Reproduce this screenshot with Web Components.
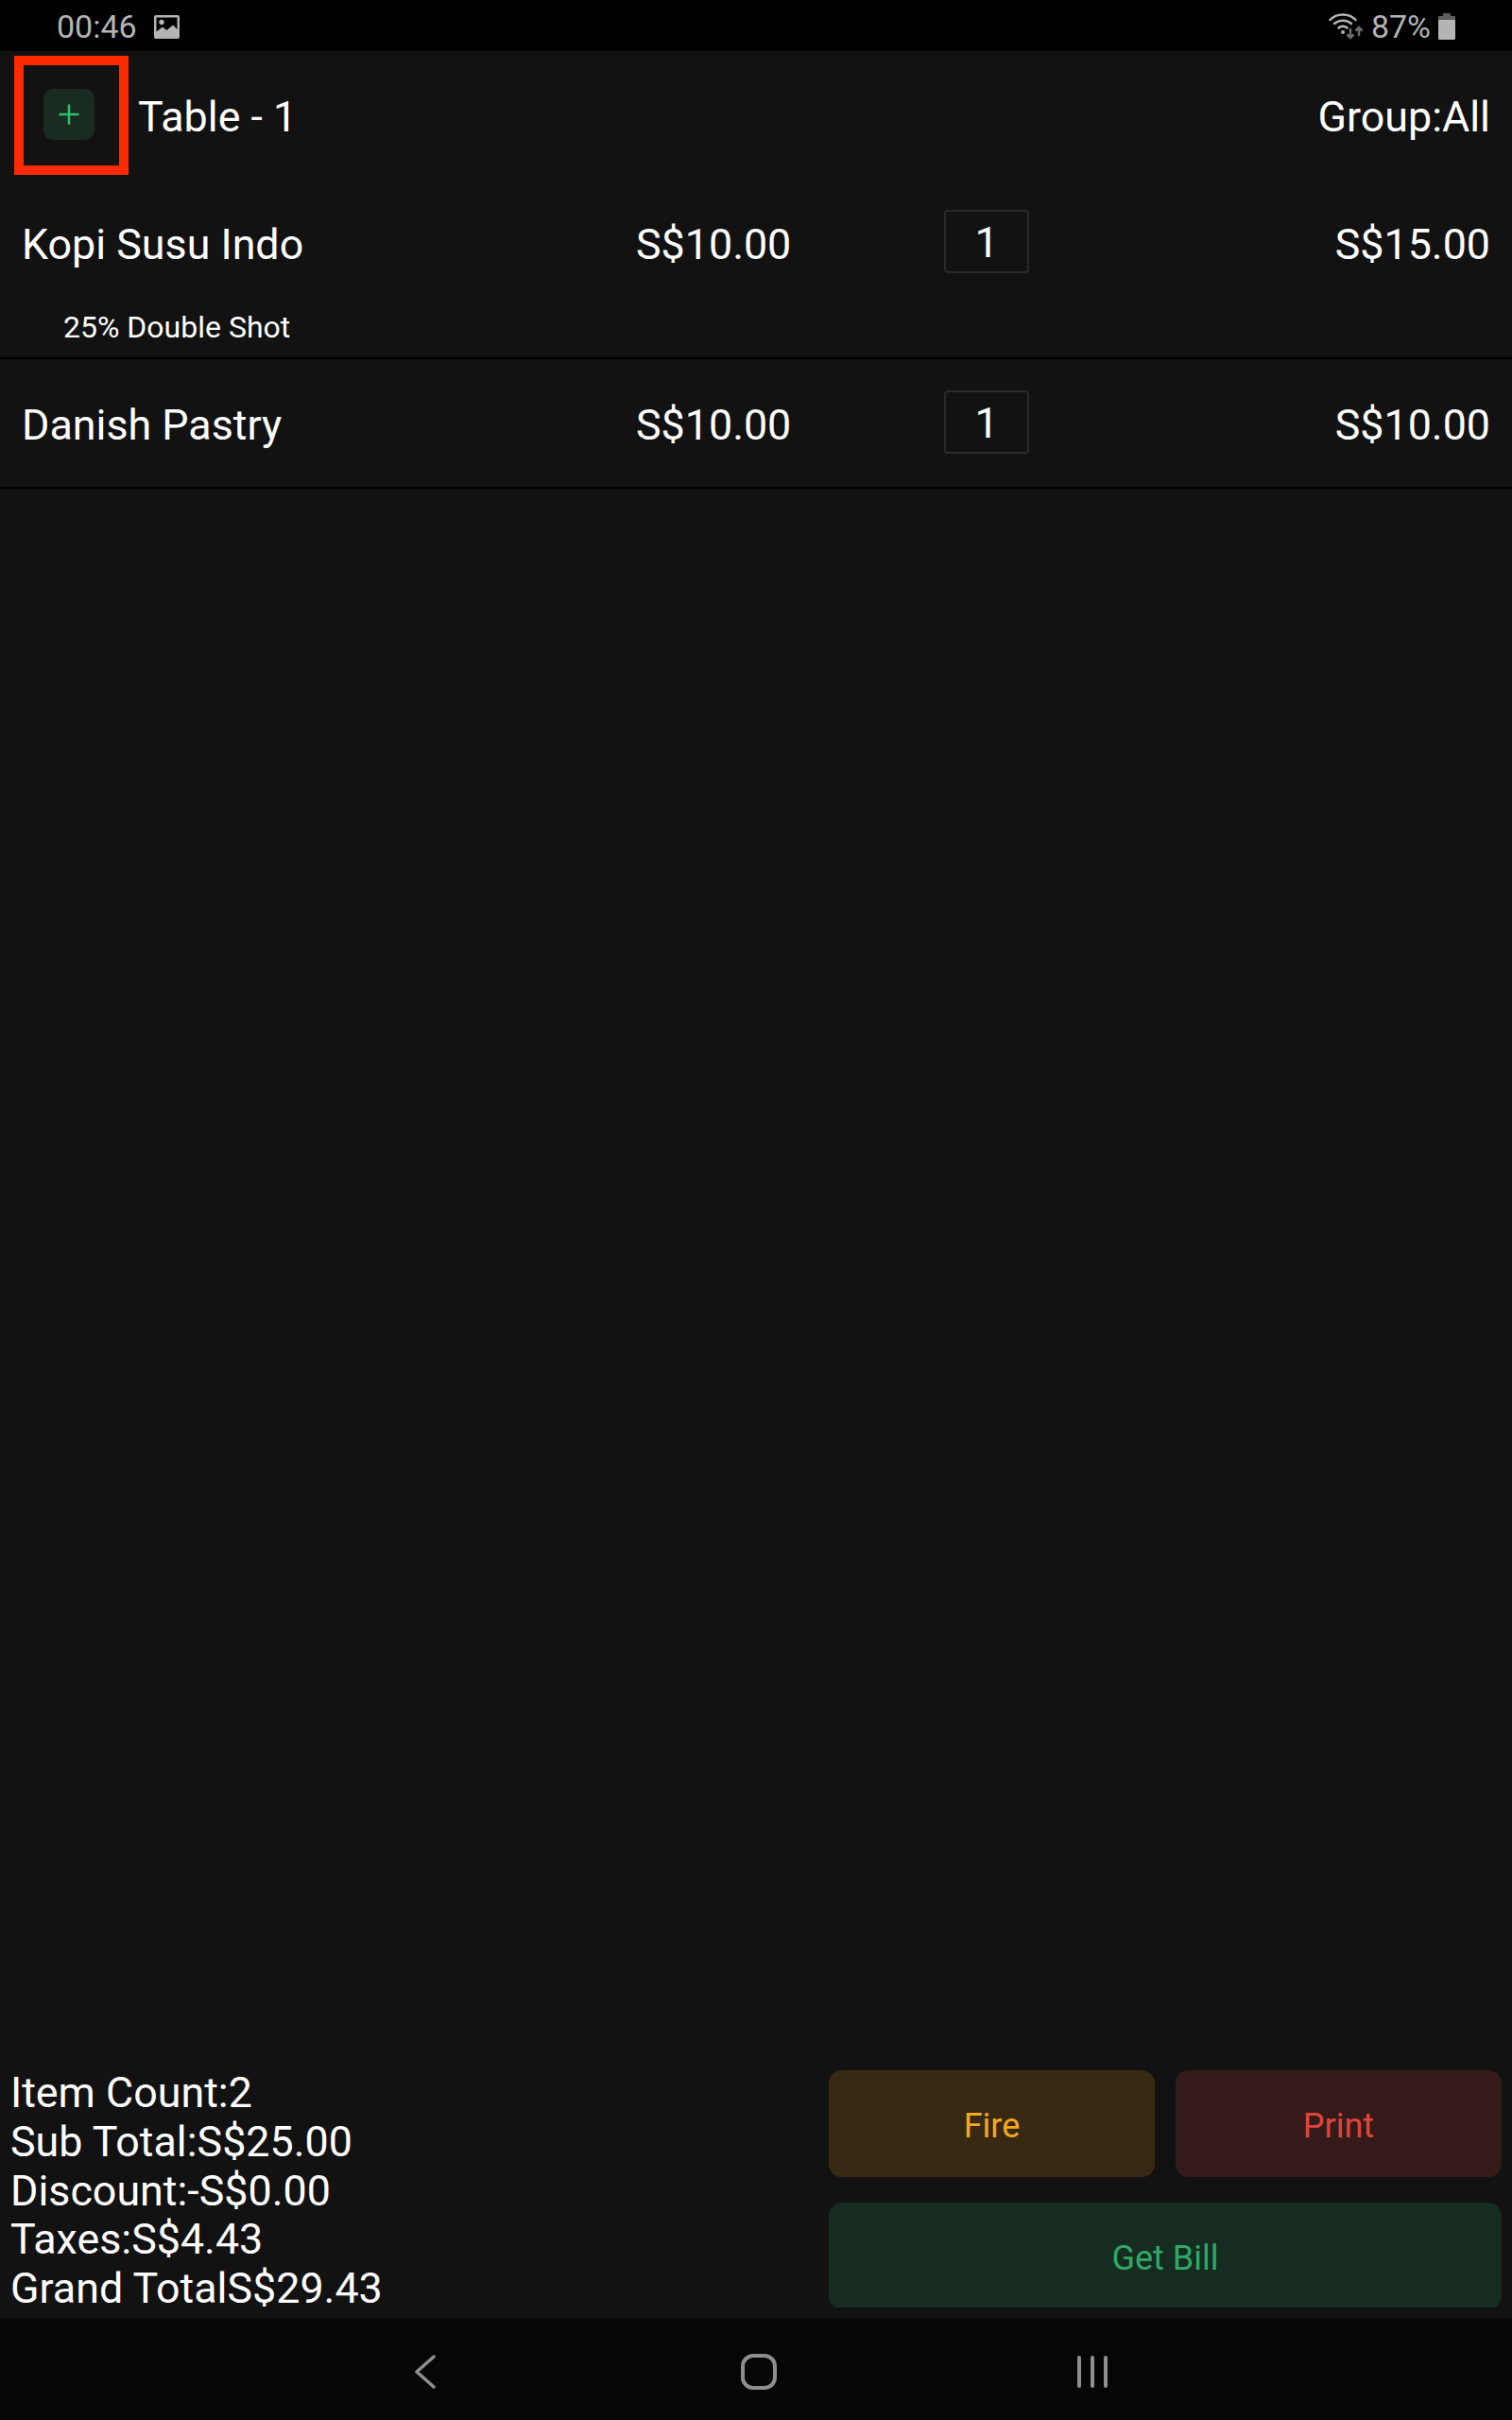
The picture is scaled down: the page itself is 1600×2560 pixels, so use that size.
<!DOCTYPE html>
<html>
<head>
<meta charset="utf-8">
<style>
  html, body { margin: 0; padding: 0; background: #121212; }
  body { font-family: Roboto, "Liberation Sans", sans-serif; color: #fff; }
</style>
</head>
<body>
<pos-screen>
  <status-bar slot="status"></status-bar>
  <order-header slot="header" table="Table - 1" group="Group:All"></order-header>
  <order-row name="Kopi Susu Indo" price="S$10.00" qty="1" total="S$15.00" note="25% Double Shot"></order-row>
  <order-row name="Danish Pastry" price="S$10.00" qty="1" total="S$10.00"></order-row>
  <order-footer slot="footer">
    <span slot="summary">Item Count:2</span>
    <span slot="summary">Sub Total:S$25.00</span>
    <span slot="summary">Discount:-S$0.00</span>
    <span slot="summary">Taxes:S$4.43</span>
    <span slot="summary">Grand TotalS$29.43</span>
    <action-button slot="actions" tone="fire">Fire</action-button>
    <action-button slot="actions" tone="print">Print</action-button>
    <action-button slot="actions" tone="bill" style="grid-column: 1 / 3">Get Bill</action-button>
  </order-footer>
  <nav-bar slot="nav"></nav-bar>
</pos-screen>

<script>
class PosScreen extends HTMLElement {
  constructor() {
    super();
    this.attachShadow({ mode: "open" }).innerHTML = `
      <style>
        :host { display: flex; flex-direction: column; height: 2560px; background: #121212; overflow: hidden; }
        .list { flex: 1; min-height: 0; }
      </style>
      <slot name="status"></slot>
      <slot name="header"></slot>
      <div class="list"><slot></slot></div>
      <slot name="footer"></slot>
      <slot name="nav"></slot>
    `;
  }
}
customElements.define("pos-screen", PosScreen);

class StatusBar extends HTMLElement {
  constructor() {
    super();
    this.attachShadow({ mode: "open" }).innerHTML = `
      <style>
        :host { display: flex; align-items: center; height: 54px; background: #000; color: #b4b4b4; font-size: 34px; padding: 2px 60px 0 60px; box-sizing: border-box; }
        .time { margin-right: 18px; }
        .right { margin-left: auto; display: flex; align-items: center; }
        svg { display: block; }
        .pct { margin: 0 8px 0 9px; }
      </style>
      <span class="time">00:46</span>
      <svg width="27" height="25" viewBox="0 0 27 25">
        <path fill="#b4b4b4" fill-rule="evenodd" d="M2 0h23a2 2 0 0 1 2 2v21a2 2 0 0 1-2 2H2a2 2 0 0 1-2-2V2a2 2 0 0 1 2-2zM2.500 17.500 9 12.500l4.500 3.500L20 10.500l4.500 4.500V2.500h-22zM8 4.800a2.700 2.700 0 1 1 0 5.400a2.700 2.700 0 0 1 0-5.400z"/>
      </svg>
      <div class="right">
        <svg width="36" height="28" viewBox="0 0 36 28" fill="none" stroke="#b4b4b4" stroke-width="2.500" stroke-linecap="round">
          <path d="M1.500 7C8-.5 22-.5 28.500 7"/>
          <path d="M6 11C11 6.500 19 6.500 24 11"/>
          <path d="M10.500 15.500C13 13 17 13 19.500 15.500"/>
          <circle cx="15" cy="20" r="2" fill="#b4b4b4" stroke="none"/>
          <path d="M23 16v10M19.500 22.500 23 26l3.500-3.500" stroke="#6c6c6c" stroke-linecap="butt"/>
          <path d="M32 24V15M28.500 18.500 32 15l3.500 3.500" stroke="#6c6c6c" stroke-linecap="butt"/>
        </svg>
        <span class="pct">87%</span>
        <svg width="18" height="28" viewBox="0 0 18 28">
          <path fill="#5e5e5e" d="M5 0h8v3h4a1 1 0 0 1 1 1v4H0V4a1 1 0 0 1 1-1h4z"/>
          <path fill="#b4b4b4" d="M0 7h18v19.500a1.500 1.500 0 0 1-1.500 1.500h-15A1.500 1.500 0 0 1 0 26.500z"/>
        </svg>
      </div>
    `;
  }
}
customElements.define("status-bar", StatusBar);

class OrderHeader extends HTMLElement {
  constructor() {
    super();
    this.attachShadow({ mode: "open" }).innerHTML = `
      <style>
        :host { display: flex; align-items: center; height: 135px; font-size: 44.800px; padding: 0 23px 0 15px; box-sizing: border-box; }
        .mark { width: 121px; height: 126px; box-sizing: border-box; border: 10px solid #ff2a00; padding: 0 5px 1px 0; display: flex; align-items: center; justify-content: center; margin-right: 10px; }
        .add { width: 54px; height: 54px; border-radius: 10px; background: #1a2c21; display: flex; align-items: center; justify-content: center; }
        .table, .group { padding-top: 4px; }
        .group { margin-left: auto; }
      </style>
      <div class="mark">
        <div class="add">
          <svg width="24" height="24" viewBox="0 0 24 24" stroke="#2fbf6b" stroke-width="2.500" stroke-linecap="round"><path d="M12 2.500v19M2.500 12h19"/></svg>
        </div>
      </div>
      <span class="table"></span>
      <span class="group"></span>
    `;
    this.shadowRoot.querySelector(".table").textContent = this.getAttribute("table");
    this.shadowRoot.querySelector(".group").textContent = this.getAttribute("group");
  }
}
customElements.define("order-header", OrderHeader);

class OrderRow extends HTMLElement {
  constructor() {
    super();
    this.attachShadow({ mode: "open" }).innerHTML = `
      <style>
        :host { display: block; padding: 33px 23px 0 23px; border-bottom: 2px solid #000; font-size: 44.800px; }
        .line { display: grid; grid-template-columns: 650px 326px 90px 1fr; align-items: center; height: 67px; padding-bottom: 35px; }
        .name, .price, .total { padding-top: 6px; }
        .qty { width: 90px; height: 67px; box-sizing: border-box; border: 2px solid #2a2a2a; border-radius: 4px; padding-top: 2px; display: flex; align-items: center; justify-content: center; }
        .total { text-align: right; }
        .note { font-size: 32px; margin-left: 44px; height: 54px; line-height: 44px; }
        .note:empty { display: none; }
      </style>
      <div class="line">
        <span class="name"></span>
        <span class="price"></span>
        <span class="qty"></span>
        <span class="total"></span>
      </div>
      <div class="note"></div>
    `;
    for (const key of ["name", "price", "qty", "total", "note"]) {
      this.shadowRoot.querySelector("." + key).textContent = this.getAttribute(key) || "";
    }
  }
}
customElements.define("order-row", OrderRow);

class OrderFooter extends HTMLElement {
  constructor() {
    super();
    this.attachShadow({ mode: "open" }).innerHTML = `
      <style>
        :host { display: flex; justify-content: space-between; align-items: flex-end; height: 262px; padding: 0 11px 0 11px; box-sizing: border-box; font-size: 44.800px; }
        .summary { display: flex; flex-direction: column; line-height: 51.800px; padding-bottom: 5px; }
        .actions { display: grid; grid-template-columns: 345px 345px; column-gap: 22px; row-gap: 27px; grid-auto-rows: 113px; height: 251px; overflow: hidden; margin-bottom: 11px; }
      </style>
      <div class="summary"><slot name="summary"></slot></div>
      <div class="actions"><slot name="actions"></slot></div>
    `;
  }
}
customElements.define("order-footer", OrderFooter);

class ActionButton extends HTMLElement {
  constructor() {
    super();
    this.attachShadow({ mode: "open" }).innerHTML = `
      <style>
        :host { display: flex; align-items: center; justify-content: center; border-radius: 14px; font-size: 36px; padding-top: 4px; box-sizing: border-box; }
        :host([tone="fire"]) { background: #382a12; color: #f5a623; }
        :host([tone="print"]) { background: #351a1a; color: #e0453a; }
        :host([tone="bill"]) { background: #172c20; color: #2fa866; }
      </style>
      <slot></slot>
    `;
  }
}
customElements.define("action-button", ActionButton);

class NavBar extends HTMLElement {
  constructor() {
    super();
    this.attachShadow({ mode: "open" }).innerHTML = `
      <style>
        :host { display: flex; justify-content: center; align-items: center; height: 108px; background: #060606; padding: 6px 0 0 6px; box-sizing: border-box; }
        div { width: 353px; display: flex; justify-content: center; }
        svg { display: block; }
      </style>
      <div><svg width="24" height="36" viewBox="0 0 24 36" fill="none" stroke="#8e8e8e" stroke-width="3.500" stroke-linecap="round" stroke-linejoin="round"><path d="M21 2 3 18 21 34"/></svg></div>
      <div><svg width="38" height="38" viewBox="0 0 38 38" fill="none" stroke="#8e8e8e" stroke-width="4"><rect x="2" y="2" width="34" height="34" rx="11"/></svg></div>
      <div><svg width="32" height="36" viewBox="0 0 32 36" stroke="#8e8e8e" stroke-width="4" stroke-linecap="round"><path d="M2 3v30M16 3v30M30 3v30"/></svg></div>
    `;
  }
}
customElements.define("nav-bar", NavBar);
</script>
</body>
</html>
